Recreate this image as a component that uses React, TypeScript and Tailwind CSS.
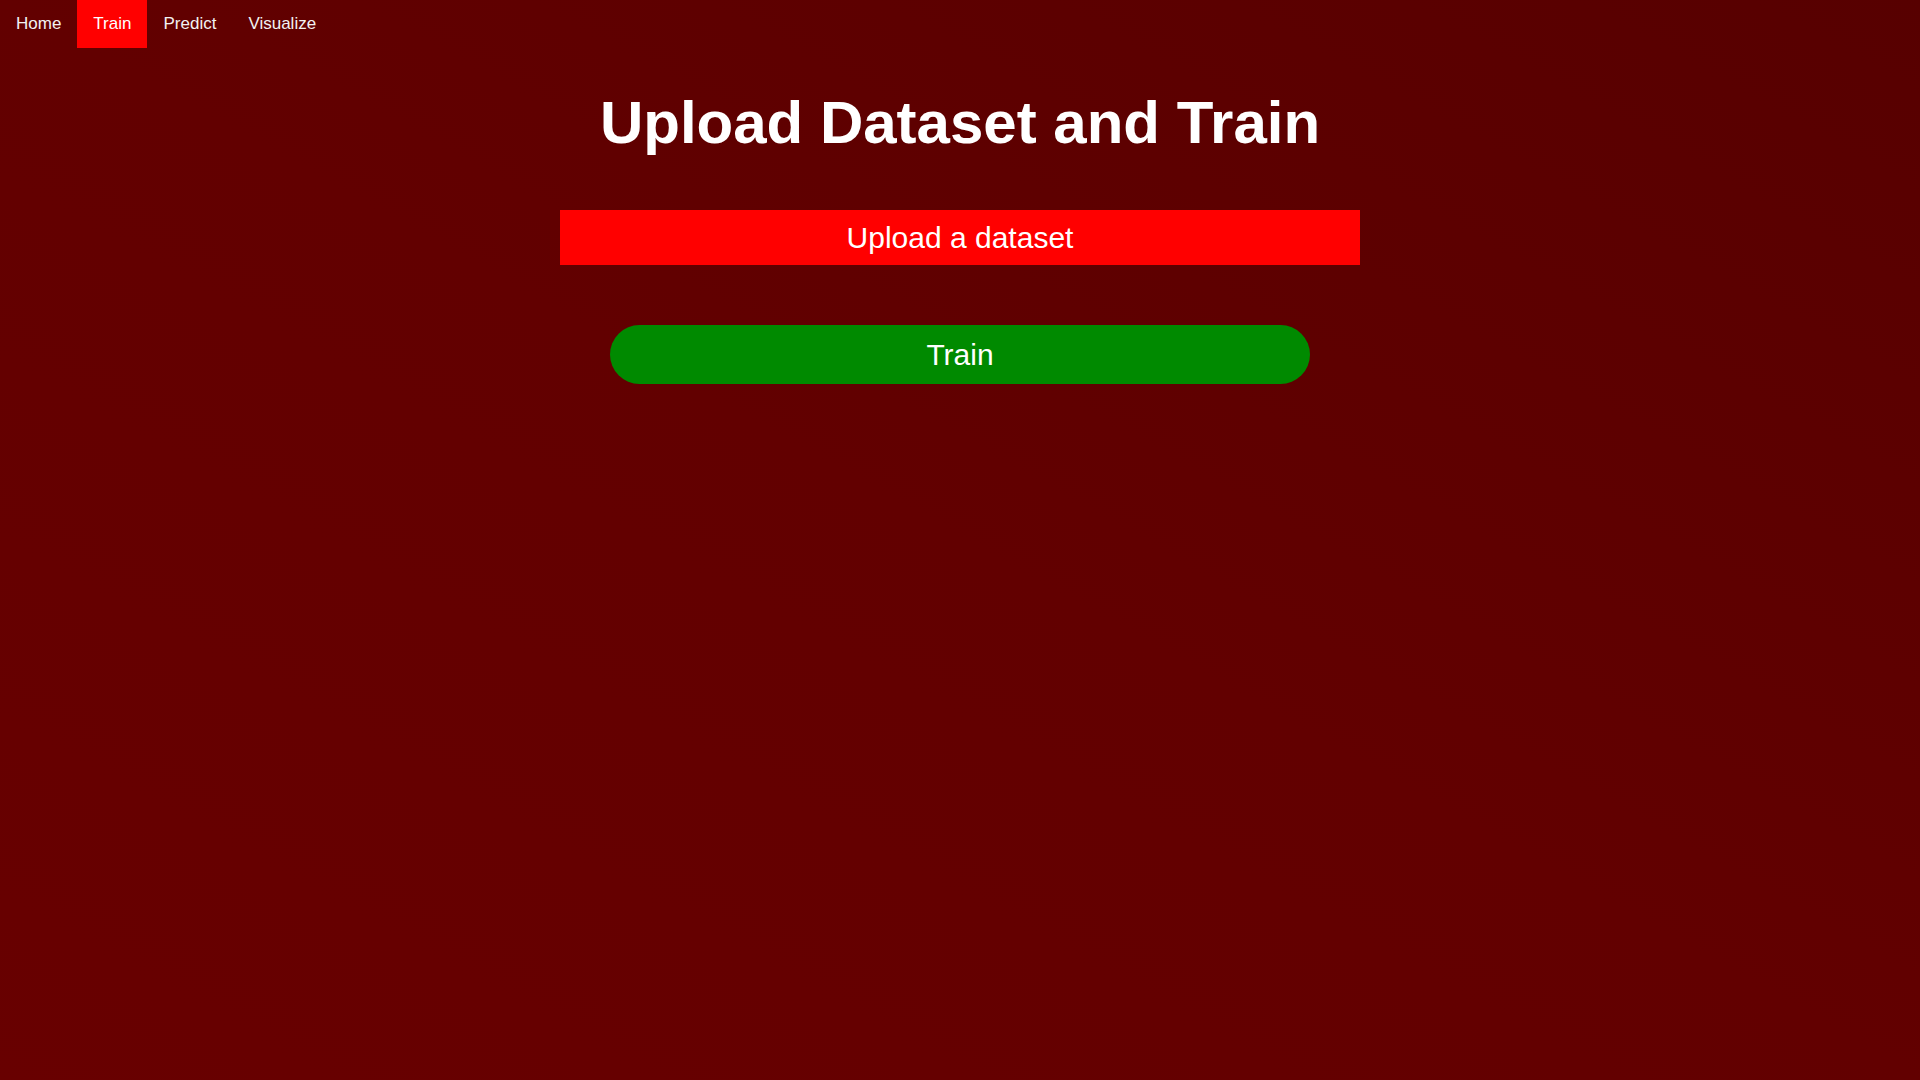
import React from "react";

type NavItemType = {
    text: string;
    active?: boolean;
};

const NavItems: NavItemType[] = [
    { text: "Home" },
    { text: "Train", active: true },
    { text: "Predict" },
    { text: "Visualize" },
];

const style = {
    font: "font-['Liberation_Sans',Arial,sans-serif]",
};

const App: React.FC = () => {
    return (
        <div
            className={`min-h-screen w-full bg-linear-to-bl from-[#570000] via-[#620000] to-[#680000] ${style.font}`}
        >
            <nav className="flex h-12">
                {NavItems.map((item: NavItemType, key: number) => (
                    <a
                        key={key}
                        href="#"
                        className={`flex h-full items-center px-4 text-[17px] text-[#f2f2f2] ${
                            item.active ? "bg-[#ff0000] text-white" : ""
                        }`}
                    >
                        {item.text}
                    </a>
                ))}
            </nav>

            <main className="flex flex-col items-center">
                <h1 className="mt-[40px] text-[60px] leading-[69px] font-bold text-white">
                    Upload Dataset and Train
                </h1>

                <label className="mt-[53px] block w-[800px] cursor-pointer bg-[#ff0000] p-2.5 text-center text-[30px] leading-[35px] text-white">
                    Upload a dataset
                    <input type="file" className="hidden" />
                </label>

                <button className="mt-[60px] w-[700px] cursor-pointer rounded-full bg-[#008a00] py-3 text-center text-[30px] leading-[35px] text-white">
                    Train
                </button>
            </main>
        </div>
    );
};

export default App;
